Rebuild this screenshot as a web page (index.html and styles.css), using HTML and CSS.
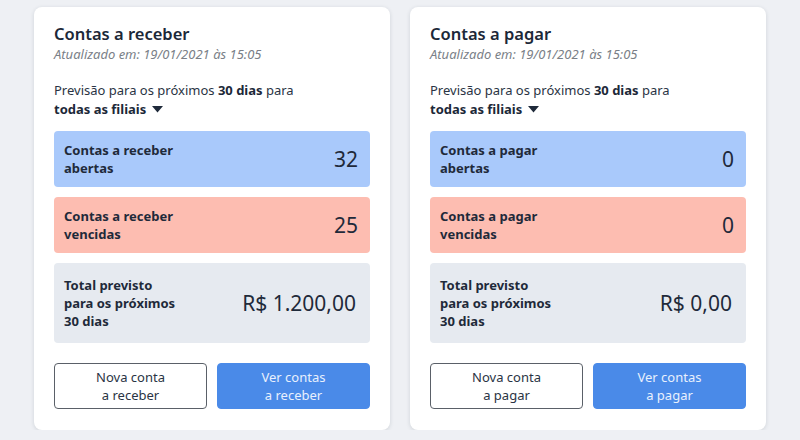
FILE: index.html
```html
<!DOCTYPE html>
<html lang="pt-BR">
<head>
<meta charset="utf-8">
<link rel="stylesheet" href="styles.css">
</head>
<body>
<div class="board">
  <section class="card">
    <h2 class="title">Contas a receber</h2>
    <p class="updated">Atualizado em: 19/01/2021 às 15:05</p>
    <p class="forecast">Previsão para os próximos <b>30 dias</b> para<br><b>todas as filiais</b> <svg class="caret" width="11" height="7" viewBox="0 0 11 7"><path d="M0 0h11L5.5 6.5z" fill="#1f2a3a"/></svg></p>
    <div class="stat stat-open"><span class="label">Contas a receber<br>abertas</span><span class="value">32</span></div>
    <div class="stat stat-due"><span class="label">Contas a receber<br>vencidas</span><span class="value">25</span></div>
    <div class="stat stat-total"><span class="label">Total previsto<br>para os próximos<br>30 dias</span><span class="value">R$ 1.200,00</span></div>
    <div class="actions">
      <button class="btn btn-outline">Nova conta<br>a receber</button>
      <button class="btn btn-primary">Ver contas<br>a receber</button>
    </div>
  </section>
  <section class="card">
    <h2 class="title">Contas a pagar</h2>
    <p class="updated">Atualizado em: 19/01/2021 às 15:05</p>
    <p class="forecast">Previsão para os próximos <b>30 dias</b> para<br><b>todas as filiais</b> <svg class="caret" width="11" height="7" viewBox="0 0 11 7"><path d="M0 0h11L5.5 6.5z" fill="#1f2a3a"/></svg></p>
    <div class="stat stat-open"><span class="label">Contas a pagar<br>abertas</span><span class="value">0</span></div>
    <div class="stat stat-due"><span class="label">Contas a pagar<br>vencidas</span><span class="value">0</span></div>
    <div class="stat stat-total"><span class="label">Total previsto<br>para os próximos<br>30 dias</span><span class="value">R$ 0,00</span></div>
    <div class="actions">
      <button class="btn btn-outline">Nova conta<br>a pagar</button>
      <button class="btn btn-primary">Ver contas<br>a pagar</button>
    </div>
  </section>
</div>
</body>
</html>
```

FILE: styles.css
```css
html, body {
  margin: 0;
  padding: 0;
  background: #eef0f4;
  font-family: "Noto Sans", "Open Sans", sans-serif;
  color: #1f2a3a;
}

.board {
  display: flex;
  gap: 20px;
  padding: 7px 34px 0;
}

.card {
  width: 356px;
  box-sizing: border-box;
  background: #fff;
  border-radius: 8px;
  box-shadow: 0 1px 4px rgba(30, 40, 60, 0.14);
  padding: 16px 20px 21px;
  display: flex;
  flex-direction: column;
}

.title {
  margin: 0;
  font-size: 16.5px;
  line-height: 22px;
  font-weight: 600;
  color: #1c2838;
}

.updated {
  margin: 0;
  font-size: 13px;
  line-height: 18px;
  font-style: italic;
  color: #7a7f87;
}

.forecast {
  margin: 18px 0 12px;
  font-size: 13px;
  line-height: 19px;
  color: #2a3444;
}

.forecast b {
  font-weight: 700;
  color: #1c2838;
}

.caret {
  vertical-align: 1px;
  margin-left: 2px;
}

.stat {
  display: flex;
  align-items: center;
  justify-content: space-between;
  border-radius: 4px;
  padding: 0 12px 0 10px;
  height: 56px;
  margin-bottom: 10px;
}

.stat-total {
  height: 80px;
  margin-bottom: 20px;
  padding-right: 14px;
}

.stat-open { background: #a9c9fb; }
.stat-due { background: #fdbdb1; }
.stat-total { background: #e6eaf0; }

.label {
  font-size: 13px;
  line-height: 18px;
  font-weight: 700;
  color: #1f2a3a;
}

.value {
  font-size: 21px;
  font-weight: 400;
  color: #1f2a3a;
}

.actions {
  display: flex;
  gap: 10px;
}

.btn {
  flex: 1;
  height: 46px;
  border-radius: 4px;
  font-family: inherit;
  font-size: 13px;
  line-height: 18px;
  padding: 0;
  cursor: pointer;
}

.btn-outline {
  background: #fff;
  border: 1px solid #5a6068;
  color: #2a3444;
}

.btn-primary {
  background: #4a8ae8;
  border: 1px solid #4a8ae8;
  color: #e8f0fd;
}
```
